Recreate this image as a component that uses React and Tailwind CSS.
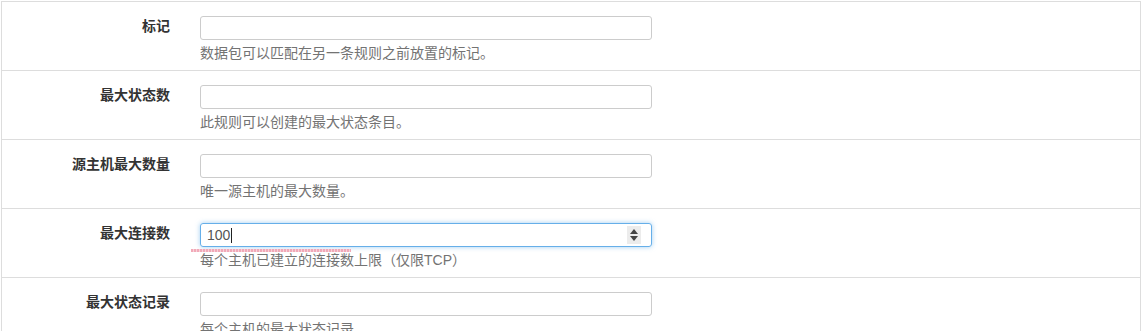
import React from "react";

const rows = [
  { label: "标记", help: "数据包可以匹配在另一条规则之前放置的标记。" },
  { label: "最大状态数", help: "此规则可以创建的最大状态条目。" },
  { label: "源主机最大数量", help: "唯一源主机的最大数量。" },
  { label: "最大连接数", help: "每个主机已建立的连接数上限（仅限TCP）", value: "100", focused: true },
  { label: "最大状态记录", help: "每个主机的最大状态记录。" },
];

const Spinner = () => (
  <span className="flex h-[18px] w-[14px] flex-col items-center justify-center gap-[2px] bg-[#ececec]">
    <svg width="8" height="5" viewBox="0 0 8 5">
      <path d="M0 5 L4 0 L8 5 Z" fill="#444" />
    </svg>
    <svg width="8" height="5" viewBox="0 0 8 5">
      <path d="M0 0 L8 0 L4 5 Z" fill="#444" />
    </svg>
  </span>
);

const Row = ({ label, help, value, focused }) => (
  <div className="flex border-t border-[#dddddd] pt-[14px] pb-[7px]">
    <div className="w-[168px] shrink-0 text-right text-[14px] font-bold leading-[20px] text-[#333]">
      {label}
    </div>
    <div className="relative ml-[30px] w-[452px]">
      {focused ? (
        <div className="flex h-[24px] items-center rounded-[3px] border border-[#66afe9] pl-[6px] pr-[10px] shadow-[0_0_5px_rgba(102,175,233,0.6)]">
          <span className="text-[14px] leading-none text-[#555]">{value}</span>
          <span className="ml-px h-[15px] w-px bg-[#222]" />
          <span className="ml-auto">
            <Spinner />
          </span>
        </div>
      ) : (
        <div className="h-[24px] rounded-[3px] border border-[#cccccc] bg-white" />
      )}
      {focused && (
        <div className="absolute left-[-9px] top-[26px] h-[3px] w-[160px] bg-[repeating-linear-gradient(90deg,#f0a0b0_0px,#f0a0b0_2px,#f7cdd6_2px,#f7cdd6_3px)] opacity-90" />
      )}
      <div className="mt-[3px] text-[14px] leading-[20px] text-[#737373]">{help}</div>
    </div>
  </div>
);

export default function App() {
  return (
    <div
      className="h-[331px] overflow-hidden bg-white pt-px"
      style={{ fontFamily: '"Liberation Sans", "Noto Sans CJK SC", sans-serif' }}
    >
      <div className="ml-px w-[1140px] border-x border-[#dddddd]">
        {rows.map((r) => (
          <Row key={r.label} {...r} />
        ))}
      </div>
    </div>
  );
}
